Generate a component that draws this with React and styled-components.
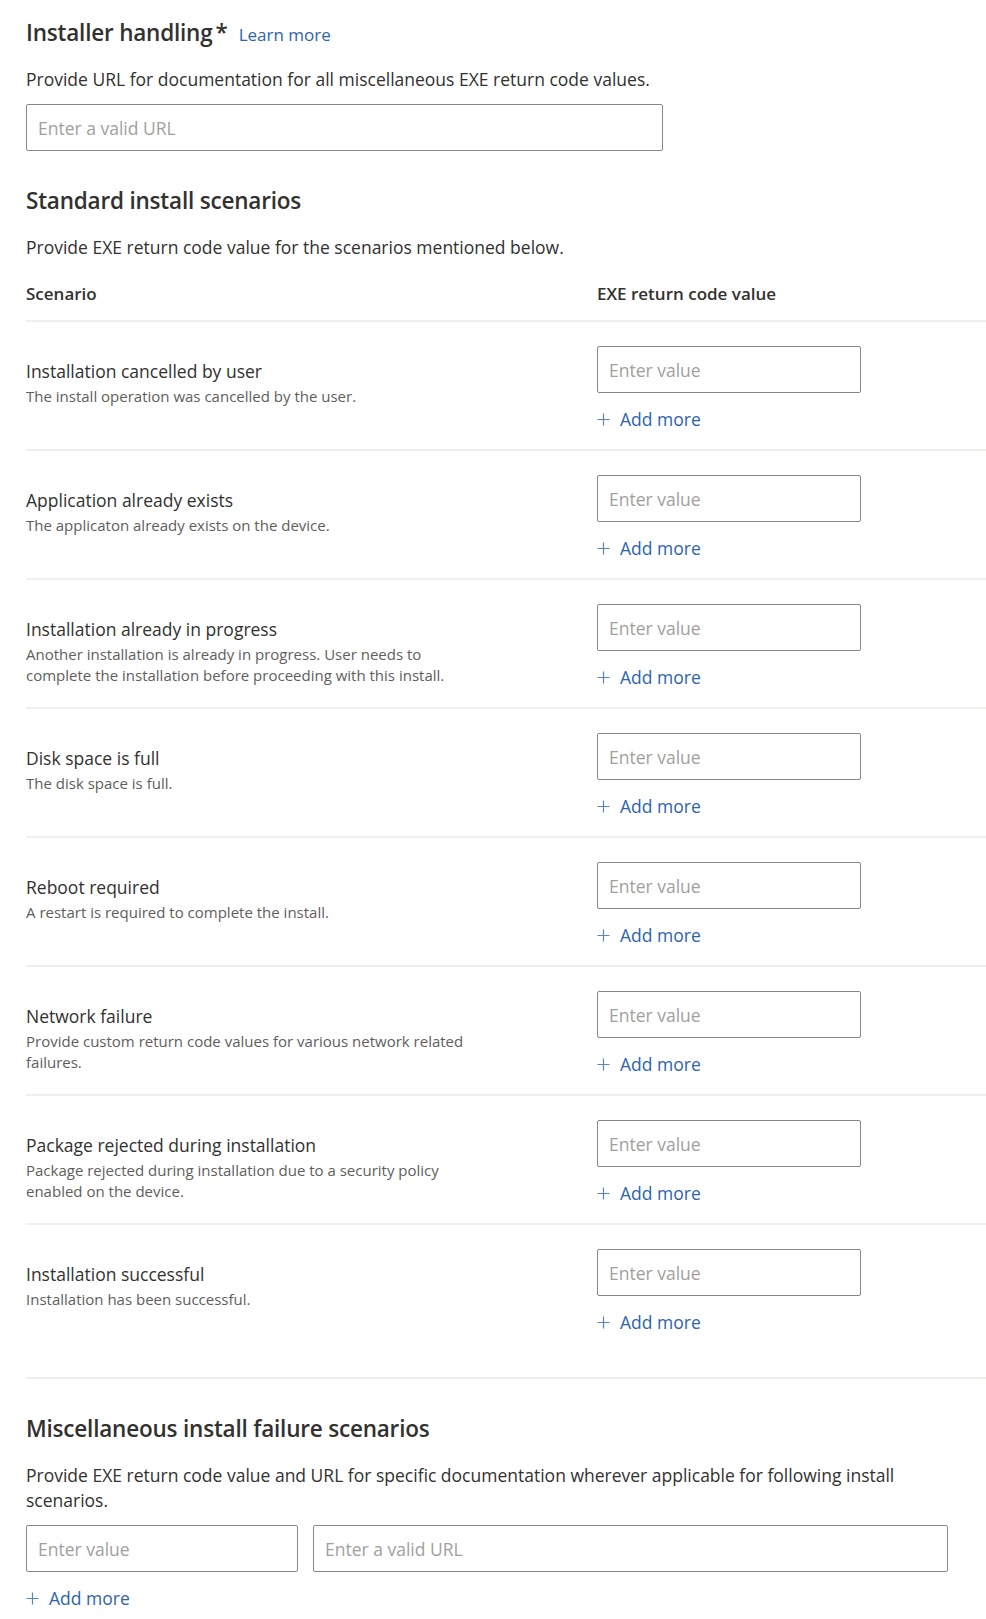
import React from "react";
import styled, { createGlobalStyle } from "styled-components";

const scenarios = [
	{ id: 1, title: "Installation cancelled by user", desc: "The install operation was cancelled by the user." },
	{ id: 2, title: "Application already exists", desc: "The applicaton already exists on the device." },
	{
		id: 3,
		title: "Installation already in progress",
		desc: "Another installation is already in progress. User needs to\ncomplete the installation before proceeding with this install.",
	},
	{ id: 4, title: "Disk space is full", desc: "The disk space is full." },
	{ id: 5, title: "Reboot required", desc: "A restart is required to complete the install." },
	{
		id: 6,
		title: "Network failure",
		desc: "Provide custom return code values for various network related\nfailures.",
	},
	{
		id: 7,
		title: "Package rejected during installation",
		desc: "Package rejected during installation due to a security policy\nenabled on the device.",
	},
	{ id: 8, title: "Installation successful", desc: "Installation has been successful." },
];

const PlusIcon = () => (
	<svg width="13" height="13" viewBox="0 0 13 13" aria-hidden="true">
		<path d="M6.5 0.5v12M0.5 6.5h12" stroke="currentColor" strokeWidth="1.2" fill="none" />
	</svg>
);

const AddMore = () => (
	<AddButton type="button">
		<PlusIcon />
		<span>Add more</span>
	</AddButton>
);

const App = () => {
	return (
		<>
			<GlobalStyle />
			<Page>
				<TopSection>
					<TitleRow>
						<SectionTitle>
							Installer handling<Required>*</Required>
						</SectionTitle>
						<LearnMore href="#">Learn more</LearnMore>
					</TitleRow>
					<Description>Provide URL for documentation for all miscellaneous EXE return code values.</Description>
					<TextInput $width="637px" placeholder="Enter a valid URL" />
				</TopSection>

				<StandardSection>
					<SectionTitle>Standard install scenarios</SectionTitle>
					<Description>Provide EXE return code value for the scenarios mentioned below.</Description>
					<HeaderRow>
						<HeaderCell>Scenario</HeaderCell>
						<HeaderCell>EXE return code value</HeaderCell>
					</HeaderRow>
					{scenarios.map((item, index) => (
						<ScenarioRow key={item.id} $last={index === scenarios.length - 1}>
							<ScenarioText>
								<ScenarioTitle>{item.title}</ScenarioTitle>
								<ScenarioDesc>{item.desc}</ScenarioDesc>
							</ScenarioText>
							<ValueColumn>
								<TextInput $width="264px" placeholder="Enter value" />
								<AddMore />
							</ValueColumn>
						</ScenarioRow>
					))}
				</StandardSection>

				<MiscSection>
					<SectionTitle>Miscellaneous install failure scenarios</SectionTitle>
					<Description $lh="25px">
						Provide EXE return code value and URL for specific documentation wherever applicable for following install
						scenarios.
					</Description>
					<MiscInputs>
						<TextInput $width="272px" placeholder="Enter value" />
						<TextInput $width="635px" placeholder="Enter a valid URL" />
					</MiscInputs>
					<AddMore />
				</MiscSection>
			</Page>
		</>
	);
};

const GlobalStyle = createGlobalStyle`
	* {
		box-sizing: border-box;
	}
	body {
		margin: 0;
		background: #ffffff;
		font-family: "Open Sans", "Noto Sans", sans-serif;
		color: #323130;
	}
`;

const Page = styled.div`
	padding: 18px 0 14px 26px;
	width: 986px;
`;

const TopSection = styled.section`
	display: flex;
	flex-direction: column;
	align-items: flex-start;
`;

const TitleRow = styled.div`
	display: flex;
	align-items: baseline;
	gap: 11px;
`;

const SectionTitle = styled.h2`
	margin: 0;
	font-size: 22.5px;
	line-height: 30px;
	font-weight: 600;
	color: #323130;
	letter-spacing: -0.2px;
`;

const Required = styled.span`
	margin-left: 3px;
	font-weight: 600;
`;

const LearnMore = styled.a`
	font-size: 17px;
	color: #2e64ac;
	text-decoration: none;
`;

const Description = styled.p`
	margin: 19px 0 0;
	max-width: 925px;
	font-size: 17.5px;
	line-height: ${(p) => p.$lh || "24px"};
	color: #323130;
`;

const TextInput = styled.input`
	display: block;
	width: ${(p) => p.$width};
	height: 47px;
	margin-top: 13px;
	padding: 0 11px;
	border: 1px solid #8a8886;
	border-radius: 2px;
	font-family: inherit;
	font-size: 17.5px;
	color: #323130;
	background: #ffffff;

	&::placeholder {
		color: #a19f9d;
	}
`;

const StandardSection = styled.section`
	margin-top: 35px;
`;

const HeaderRow = styled.div`
	display: grid;
	grid-template-columns: 571px 1fr;
	margin-top: 23px;
	padding-bottom: 14px;
	border-bottom: 2px solid #f1f0ef;
`;

const HeaderCell = styled.div`
	font-size: 17px;
	line-height: 24px;
	font-weight: 600;
	color: #323130;
`;

const ScenarioRow = styled.div`
	display: grid;
	grid-template-columns: 571px 1fr;
	padding: 24px 0 ${(p) => (p.$last ? "43px" : "18px")};
	border-bottom: 2px solid #f1f0ef;
`;

const ScenarioText = styled.div`
	padding-top: 13px;
`;

const ScenarioTitle = styled.div`
	font-size: 17.5px;
	line-height: 24px;
	color: #323130;
`;

const ScenarioDesc = styled.div`
	margin-top: 3px;
	font-size: 15px;
	line-height: 21px;
	color: #605e5c;
	white-space: pre-line;
`;

const ValueColumn = styled.div`
	display: flex;
	flex-direction: column;
	align-items: flex-start;

	input {
		margin-top: 0;
	}
`;

const AddButton = styled.button`
	display: flex;
	align-items: center;
	gap: 10px;
	margin-top: 14px;
	padding: 0;
	border: none;
	background: transparent;
	font-family: inherit;
	font-size: 17.5px;
	line-height: 24px;
	color: #2e64ac;
	cursor: pointer;

	svg {
		color: #5a84bd;
	}
`;

const MiscSection = styled.section`
	margin-top: 35px;
`;

const MiscInputs = styled.div`
	display: flex;
	gap: 15px;

	input {
		margin-top: 12px;
	}
`;

export default App;
